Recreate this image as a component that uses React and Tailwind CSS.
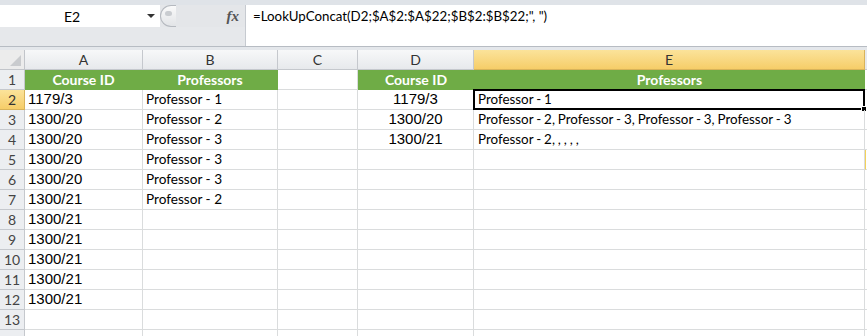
import React from "react"

const colA = ["Course ID", "1179/3", "1300/20", "1300/20", "1300/20", "1300/20", "1300/21", "1300/21", "1300/21", "1300/21", "1300/21", "1300/21", "", ""]
const colB = ["Professors", "Professor - 1", "Professor - 2", "Professor - 3", "Professor - 3", "Professor - 3", "Professor - 2"]
const colD = ["Course ID", "1179/3", "1300/20", "1300/21"]
const colE = ["Professors", "Professor - 1", "Professor - 2, Professor - 3, Professor - 3, Professor - 3", "Professor - 2, , , , ,"]

const arial = { fontFamily: '"Liberation Sans", Arial, sans-serif' }
const calibri = { fontFamily: 'Lato, "Open Sans", sans-serif' }

function FormulaBar() {
  return (
    <div className="h-[47px] bg-[#dfe3e8] pt-[5px] flex border-b border-[#b7bcc3]">
      <div className="w-[160px] flex flex-col">
        <div className="h-[22px] bg-white flex items-center relative">
          <span className="flex-1 text-center text-[14px] text-black pr-[16px]" style={calibri}>E2</span>
          <span className="absolute left-[147px] top-[9px] w-0 h-0 border-l-[4px] border-r-[4px] border-t-[4px] border-l-transparent border-r-transparent border-t-[#333]"></span>
        </div>
        <div className="flex-1 bg-[#e6e8eb]"></div>
      </div>
      <div className="w-[85px] flex flex-col">
        <div className="h-[22px] bg-[#e4e6e9] flex items-center relative">
          <div className="w-[16px] h-[22px] rounded-l-full border border-r-0 border-[#b5b9bf] bg-gradient-to-b from-[#fafafa] to-[#e2e4e7] flex items-start justify-center pt-[5px]">
            <div className="w-[7px] h-[5px] rounded-full bg-[#c9ccd0]"></div>
          </div>
          <span className="ml-auto mr-[6px] text-[15px] italic font-bold text-[#555]" style={{ fontFamily: '"Liberation Serif", serif' }}>fx</span>
        </div>
        <div className="flex-1 bg-[#e6e8eb]"></div>
      </div>
      <div className="flex-1 bg-white border-l border-[#c6cad0] pl-[7px] pt-[2px] text-[13.3px] text-black" style={calibri}>
        =LookUpConcat(D2;$A$2:$A$22;$B$2:$B$22;", ")
      </div>
    </div>
  )
}

const cols = ["A", "B", "C", "D", "E"]

export default function App() {
  const rows = Array.from({ length: 14 }, (_, i) => i + 1)
  return (
    <div className="w-[867px] h-[336px] overflow-hidden bg-white">
      <FormulaBar />
      <div className="h-[3px] bg-[#e4e7eb]"></div>
      <div className="grid grid-cols-[25px_118px_135px_80px_116px_391px_2px] auto-rows-[20px]">
        {/* column headers */}
        <div className="bg-[#ececec] border-r border-b border-[#c2c5ca] relative">
          <span className="absolute right-[3px] bottom-[3px] w-[11px] h-[11px] bg-[#c9cbce] [clip-path:polygon(100%_0,100%_100%,0_100%)]"></span>
        </div>
        {cols.map((c) => (
          <div
            key={c}
            className={
              c === "E"
                ? "bg-gradient-to-b from-[#fbe39a] to-[#f6cd68] border-r border-b border-[#d8b35a] flex items-center justify-center text-[14px] text-[#333]"
                : "bg-gradient-to-b from-[#f7f8f9] to-[#e7e9ec] border-r border-b border-[#c5c8cd] flex items-center justify-center text-[14px] text-[#333]"
            }
            style={calibri}
          >
            {c}
          </div>
        ))}
        <div className="bg-[#e7e9ec] border-b border-[#c5c8cd]"></div>

        {rows.map((r) => {
          const i = r - 1
          const hdr = r === 1
          return (
            <React.Fragment key={r}>
              <div
                className={
                  r === 2
                    ? "bg-gradient-to-b from-[#fbe39a] to-[#f6cd68] border-r border-b border-[#d8b35a] flex items-center justify-center text-[14px] text-[#333]"
                    : "bg-[#eceef1] border-r border-b border-[#c5c8cd] flex items-center justify-center text-[14px] text-[#444]"
                }
                style={calibri}
              >
                {r < 14 ? r : ""}
              </div>
              {/* A */}
              <div
                className={
                  hdr
                    ? "bg-[#6fac46] border-r border-b border-[#6fac46] flex items-center justify-center text-white font-bold text-[14px]"
                    : "border-r border-b border-[#dadcdd] flex items-center pl-[3px] text-[15px] text-black"
                }
                style={hdr ? calibri : arial}
              >
                {colA[i]}
              </div>
              {/* B */}
              <div
                className={
                  hdr
                    ? "bg-[#6fac46] border-r border-b border-[#6fac46] flex items-center justify-center text-white font-bold text-[14px]"
                    : "border-r border-b border-[#dadcdd] flex items-center pl-[3px] text-[13.6px] text-black"
                }
                style={calibri}
              >
                {colB[i] || ""}
              </div>
              {/* C */}
              <div className="border-r border-b border-[#dadcdd]"></div>
              {/* D */}
              <div
                className={
                  hdr
                    ? "bg-[#6fac46] border-b border-[#6fac46] flex items-center justify-center text-white font-bold text-[14px]"
                    : "border-r border-b border-[#dadcdd] flex items-center justify-center text-[15px] text-black"
                }
                style={hdr ? calibri : arial}
              >
                {colD[i] || ""}
              </div>
              {/* E */}
              <div
                className={
                  hdr
                    ? "bg-[#6fac46] border-b border-[#6b4f8a] flex items-center justify-center text-white font-bold text-[14px]"
                    : "border-r border-b border-[#dadcdd] flex items-center pl-[4px] text-[13.4px] text-black relative whitespace-nowrap [word-spacing:-0.5px]"
                }
                style={calibri}
              >
                {colE[i] || ""}
                {r === 2 && (
                  <div className="absolute -left-[1px] -top-[1px] -right-[1px] -bottom-[1px] border-2 border-black">
                    <span className="absolute -right-[4px] -bottom-[4px] w-[6px] h-[6px] bg-black border border-white"></span>
                  </div>
                )}
              </div>
              <div className={r === 5 ? "border-l border-[#f3d25a] border-b border-b-[#dadcdd]" : "border-b border-[#dadcdd]"}></div>
            </React.Fragment>
          )
        })}
      </div>
    </div>
  )
}
